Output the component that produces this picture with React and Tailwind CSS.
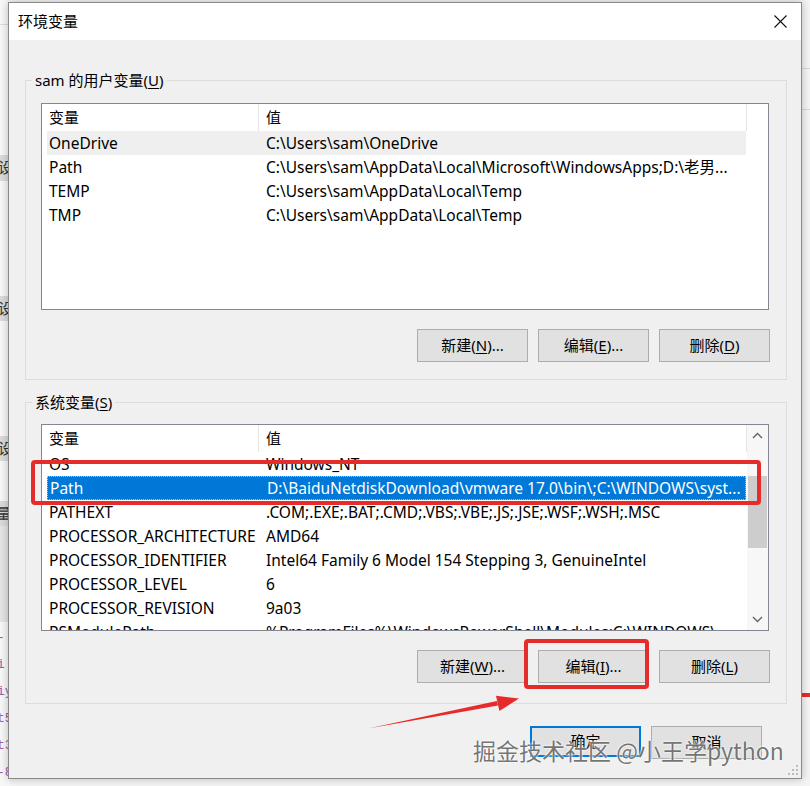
import React from "react";

const userVars = [
  ["OneDrive", "C:\\Users\\sam\\OneDrive"],
  ["Path", "C:\\Users\\sam\\AppData\\Local\\Microsoft\\WindowsApps;D:\\老男..."],
  ["TEMP", "C:\\Users\\sam\\AppData\\Local\\Temp"],
  ["TMP", "C:\\Users\\sam\\AppData\\Local\\Temp"],
];

const sysVars = [
  ["OS", "Windows_NT"],
  ["Path", "D:\\BaiduNetdiskDownload\\vmware 17.0\\bin\\;C:\\WINDOWS\\syst..."],
  ["PATHEXT", ".COM;.EXE;.BAT;.CMD;.VBS;.VBE;.JS;.JSE;.WSF;.WSH;.MSC"],
  ["PROCESSOR_ARCHITECTURE", "AMD64"],
  ["PROCESSOR_IDENTIFIER", "Intel64 Family 6 Model 154 Stepping 3, GenuineIntel"],
  ["PROCESSOR_LEVEL", "6"],
  ["PROCESSOR_REVISION", "9a03"],
  ["PSModulePath", "%ProgramFiles%\\WindowsPowerShell\\Modules;C:\\WINDOWS\\..."],
];

const Hot = ({ children }) => <span className="underline underline-offset-[2px]">{children}</span>;

const Btn = ({ children, primary }) => (
  <button
    className={
      primary
        ? "h-[31px] w-[111px] border-2 border-[#0078d7] bg-[#e1e1e1] text-[15px] text-black"
        : "h-[33px] w-[111px] border border-[#adadad] bg-[#e1e1e1] text-[15px] text-black"
    }>
    {children}
  </button>
);

const Header = () => (
  <div className="flex h-[27px] shrink-0 items-center bg-white">
    <div className="flex h-full w-[217px] items-center border-r border-[#e5e5e5] pl-[7px]">变量</div>
    <div className="flex h-full w-[488px] items-center border-r border-[#e5e5e5] pl-[7px]">值</div>
  </div>
);

const Row = ({ name, value, selected, hover }) => (
  <div
    className={
      "ml-[5px] flex h-[24px] w-[699px] shrink-0 items-center whitespace-nowrap pt-[2px] text-[15.5px] " +
      (selected
        ? "border border-dotted border-[#9cc8f2] bg-[#0078d7] text-white"
        : hover
        ? "bg-[#efefef]"
        : "")
    }>
    <div className="w-[212px] overflow-hidden pl-[2px]">{name}</div>
    <div className="flex-1 overflow-hidden pl-[7px]">{value}</div>
  </div>
);

const Chevron = ({ up }) => (
  <svg width="11" height="7" viewBox="0 0 11 7">
    <path
      d={up ? "M1 6 L5.5 1.5 L10 6" : "M1 1 L5.5 5.5 L10 1"}
      fill="none"
      stroke="#606060"
      strokeWidth="1.3"
    />
  </svg>
);

const Group = ({ title, hot, children, className }) => (
  <fieldset className={"border border-[#dcdcdc] px-[15px] " + className}>
    <legend className="-ml-[9px] px-[3px] text-[15px] leading-[20px]">
      {title}(<Hot>{hot}</Hot>)
    </legend>
    {children}
  </fieldset>
);

export default function App() {
  return (
    <div className="relative h-[786px] w-[810px] overflow-hidden bg-[#f4f4f4] font-['Noto_Sans','Noto_Sans_CJK_SC',sans-serif] text-[15px] text-black">
      {/* window behind, left edge */}
      <div className="absolute left-0 top-0 flex h-full w-[10px] flex-col bg-[#f7f7f7] text-[15px] text-[#333]">
        <div className="h-[28px] border-b border-[#dcdcdc]" />
        <div className="mt-[130px] flex h-[28px] items-center justify-end bg-[#dadada] leading-none">
          <span className="-mr-[3px]">设</span>
        </div>
        <div className="mt-[115px] flex h-[28px] items-center justify-end bg-[#dadada] leading-none">
          <span className="-mr-[3px]">设</span>
        </div>
        <div className="mt-[115px] flex h-[28px] items-center justify-end bg-[#dadada] leading-none">
          <span className="-mr-[3px]">设</span>
        </div>
        <div className="mt-[40px] flex h-[28px] items-center justify-end bg-[#dadada] leading-none">
          <span className="-mr-[1px]">量</span>
        </div>
        <div className="h-[106px] bg-[#e4e4e4]" />
        <div className="flex flex-col pt-[2px] font-['Liberation_Mono',monospace] text-[13px] leading-[27px] text-[#a05aa8]">
          <div className="-ml-[3px]">-i</div>
          <div className="-ml-[3px]">iy</div>
          <div className="-ml-[3px]">t5</div>
          <div className="-ml-[3px]">t3</div>
          <div className="-ml-[3px]">-8</div>
        </div>
      </div>
      {/* window behind, right edge */}
      <div className="absolute right-0 top-0 flex h-full w-[10px] flex-col">
        <div className="mt-[68px] h-px bg-[#d6d6d6]" />
        <div className="mt-[40px] h-px bg-[#d6d6d6]" />
      </div>
      <div className="absolute left-[802px] top-[693px] h-[4px] w-[10px] bg-[#e62b2b]" />

      {/* dialog */}
      <div className="absolute left-[8px] top-[2px] flex h-[777px] w-[794px] flex-col border border-[#8a8a8a] bg-[#f0f0f0] shadow-[0_0_8px_rgba(0,0,0,0.25)]">
        <div className="flex h-[37px] shrink-0 items-center justify-between bg-white pl-[9px] pr-[14px]">
          <span>环境变量</span>
          <svg width="13" height="13" viewBox="0 0 13 13">
            <path d="M0.5 0.5 L12.5 12.5 M12.5 0.5 L0.5 12.5" stroke="#111" strokeWidth="1.1" />
          </svg>
        </div>

        <div className="flex flex-col pl-[16px] pr-[14px]">
          <Group title="sam 的用户变量" hot="U" className="mt-[30px] pb-[17px] pt-[13px]">
            <div className="flex h-[207px] w-[728px] flex-col border border-[#828790] bg-white">
              <Header />
              {userVars.map(([n, v], i) => (
                <Row key={n} name={n} value={v} hover={i === 0} />
              ))}
            </div>
            <div className="mt-[19px] flex justify-end gap-[10px] pr-[1px]">
              <Btn>新建(<Hot>N</Hot>)...</Btn>
              <Btn>编辑(<Hot>E</Hot>)...</Btn>
              <Btn>删除(<Hot>D</Hot>)</Btn>
            </div>
          </Group>

          <Group title="系统变量" hot="S" className="mt-[12px] pb-[20px] pt-[12px]">
            <div className="flex h-[207px] w-[728px] border border-[#828790] bg-white">
              <div className="flex flex-1 flex-col overflow-hidden">
                <Header />
                {sysVars.map(([n, v], i) => (
                  <Row key={n} name={n} value={v} selected={i === 1} />
                ))}
              </div>
              <div className="flex w-[21px] shrink-0 flex-col bg-[#f7f7f7]">
                <div className="flex h-[21px] items-center justify-center">
                  <Chevron up />
                </div>
                <div className="mx-[1px] mt-[30px] h-[72px] bg-[#cdcdcd]" />
                <div className="flex-1" />
                <div className="flex h-[21px] items-center justify-center">
                  <Chevron />
                </div>
              </div>
            </div>
            <div className="mt-[19px] flex justify-end gap-[10px] pr-[1px]">
              <Btn>新建(<Hot>W</Hot>)...</Btn>
              <Btn>编辑(<Hot>I</Hot>)...</Btn>
              <Btn>删除(<Hot>L</Hot>)</Btn>
            </div>
          </Group>

          <div className="mt-[22px] flex justify-end gap-[10px] pr-[25px]">
            <Btn primary>确定</Btn>
            <Btn>取消</Btn>
          </div>
        </div>

        <svg className="absolute bottom-[2px] right-[2px]" width="12" height="12" viewBox="0 0 12 12">
          {[
            [10, 2],
            [10, 6],
            [6, 6],
            [10, 10],
            [6, 10],
            [2, 10],
          ].map(([x, y]) => (
            <rect key={x + "-" + y} x={x - 1} y={y - 1} width="2" height="2" fill="#bcbcbc" />
          ))}
        </svg>
      </div>

      {/* annotations */}
      <div className="pointer-events-none absolute left-[31px] top-[460px] h-[45px] w-[730px] rounded-[4px] border-[4px] border-[#e62b2b]" />
      <div className="pointer-events-none absolute left-[524px] top-[639px] h-[50px] w-[125px] rounded-[4px] border-[4px] border-[#e62b2b]" />
      <svg className="pointer-events-none absolute left-0 top-0" width="810" height="786">
        <polygon points="368,728.5 497,701 498,705.6" fill="#e62b2b" />
        <polygon points="519,698.5 496,695.8 499.4,711" fill="#e62b2b" />
      </svg>
      <div className="pointer-events-none absolute left-[473px] top-[734px] whitespace-nowrap font-['Noto_Sans_CJK_SC','Noto_Sans',sans-serif] text-[23px] leading-[32px] text-[#5c5c5c]/85 [text-shadow:0_0_2px_#fff,0_0_2px_#fff]">
        掘金技术社区 @小王学python
      </div>
    </div>
  );
}
